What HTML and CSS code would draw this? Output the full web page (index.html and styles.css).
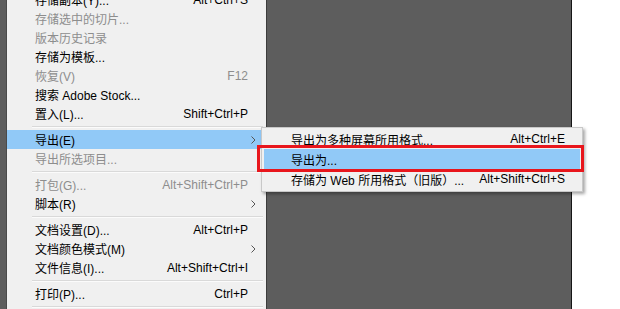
FILE: index.html
```
<!DOCTYPE html>
<html lang="zh-CN">
<head>
  <meta charset="UTF-8" />
  <title>文件菜单 - 导出</title>
  <link rel="stylesheet" href="styles.css">
</head>
<body>
  <div class="screen">
    <div class="edge"></div>

    <ul class="menu">
      <li class="item first"><span>存储副本(Y)...</span><span>Alt+Ctrl+S</span></li>
      <li class="item off"><span>存储选中的切片...</span></li>
      <li class="item off"><span>版本历史记录</span></li>
      <li class="item"><span>存储为模板...</span></li>
      <li class="item off"><span>恢复(V)</span><span>F12</span></li>
      <li class="item"><span>搜索 Adobe Stock...</span></li>
      <li class="item"><span>置入(L)...</span><span>Shift+Ctrl+P</span></li>
      <li class="sep"></li>
      <li class="item hot"><span>导出(E)</span><svg class="arrow" width="5" height="8" viewBox="0 0 5 8"><path d="M0.5 0.5 L4 4 L0.5 7.5" fill="none" stroke="#555" /></svg></li>
      <li class="item off"><span>导出所选项目...</span></li>
      <li class="sep"></li>
      <li class="item off"><span>打包(G)...</span><span>Alt+Shift+Ctrl+P</span></li>
      <li class="item"><span>脚本(R)</span><svg class="arrow" width="5" height="8" viewBox="0 0 5 8"><path d="M0.5 0.5 L4 4 L0.5 7.5" fill="none" stroke="#555" /></svg></li>
      <li class="sep"></li>
      <li class="item"><span>文档设置(D)...</span><span>Alt+Ctrl+P</span></li>
      <li class="item"><span>文档颜色模式(M)</span><svg class="arrow" width="5" height="8" viewBox="0 0 5 8"><path d="M0.5 0.5 L4 4 L0.5 7.5" fill="none" stroke="#555" /></svg></li>
      <li class="item"><span>文件信息(I)...</span><span>Alt+Shift+Ctrl+I</span></li>
      <li class="sep"></li>
      <li class="item"><span>打印(P)...</span><span>Ctrl+P</span></li>
      <li class="sep"></li>
      <li class="item"><span>退出(X)</span><span>Ctrl+Q</span></li>
    </ul>

    <div class="canvas"></div>
    <div class="blank"></div>

    <!-- submenu of 导出(E) -->
    <ul class="submenu">
      <li class="item"><span>导出为多种屏幕所用格式...</span><span>Alt+Ctrl+E</span></li>
      <li class="item hot"><span>导出为...</span></li>
      <li class="item"><span>存储为 Web 所用格式（旧版）...</span><span>Alt+Shift+Ctrl+S</span></li>
    </ul>
    <div class="callout"></div>
  </div>
</body>
</html>
```

FILE: styles.css
```
body { margin: 0; font-family: "Liberation Sans", "Noto Sans CJK SC", sans-serif; font-size: 12px; color: #000; }
ul { list-style: none; margin: 0; padding: 0; }

.screen { position: relative; display: flex; width: 620px; height: 309px; overflow: hidden; }
.edge { width: 6px; background: #5d5d5d; border-right: 1px solid #4a4a4a; }
.menu { width: 259px; background: #f0f0f0; border-right: 1px solid #3c3c3c; }
.canvas { width: 304px; background: #5d5d5d; border-right: 1px solid #161616; }
.blank { flex: 1; background: #fff; }

.item { display: flex; justify-content: space-between; align-items: center; height: 19px; padding: 0 18px 0 28px; white-space: nowrap; }
.item.first { margin-top: -10px; }
.item.off { color: #8d8d8d; }
.item.hot { background: #91c9f7; }
.arrow { margin-right: -8px; }
.sep { height: 1px; margin: 3px 3px 2px 25px; background: #d9d9d9; border-bottom: 1px solid #fbfbfb; }

.submenu { position: absolute; left: 261px; top: 127px; width: 320px; padding: 1px 0 2px; background: #f0f0f0; border: 1px solid #c8c8c8; box-shadow: 2px 2px 3px rgba(0, 0, 0, 0.35); }
.submenu .item { height: 20px; padding: 0 17px 0 29px; }
.submenu .item.hot { margin: 0 2px; padding-left: 27px; }

.callout { position: absolute; left: 257px; top: 145px; width: 321px; height: 21px; border: 3px solid #e8161c; }
```
